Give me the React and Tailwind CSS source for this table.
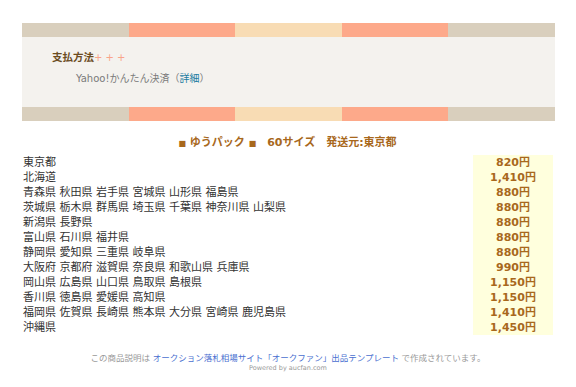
const rows = [
  ["東京都", "820円"],
  ["北海道", "1,410円"],
  ["青森県 秋田県 岩手県 宮城県 山形県 福島県", "880円"],
  ["茨城県 栃木県 群馬県 埼玉県 千葉県 神奈川県 山梨県", "880円"],
  ["新潟県 長野県", "880円"],
  ["富山県 石川県 福井県", "880円"],
  ["静岡県 愛知県 三重県 岐阜県", "880円"],
  ["大阪府 京都府 滋賀県 奈良県 和歌山県 兵庫県", "990円"],
  ["岡山県 広島県 山口県 鳥取県 島根県", "1,150円"],
  ["香川県 徳島県 愛媛県 高知県", "1,150円"],
  ["福岡県 佐賀県 長崎県 熊本県 大分県 宮崎県 鹿児島県", "1,410円"],
  ["沖縄県", "1,450円"],
];

function Stripe() {
  return (
    <div className="flex h-[14px]">
      <div className="flex-1 bg-[#d9cfbd]" />
      <div className="flex-1 bg-[#fda98a]" />
      <div className="flex-1 bg-[#f8dcb4]" />
      <div className="flex-1 bg-[#fda98a]" />
      <div className="flex-1 bg-[#d9cfbd]" />
    </div>
  );
}

export default function App() {
  return (
    <div
      className="w-[576px] h-[387px] bg-white pt-[23px] text-[11px] text-[#333]"
      style={{ fontFamily: '"DejaVu Sans", "Noto Sans CJK JP", sans-serif' }}
    >
      {/* 支払方法 */}
      <div className="ml-[22px] w-[533px]">
        <Stripe />
        <div className="h-[70px] bg-[#f4f2ee] pl-[30px] pt-[13px] text-[10px]">
          <div className="leading-[15px]">
            <span className="text-[10.5px] font-bold text-[#6b4c1f]">支払方法</span>
            <span className="text-[#f9a48a]">+ + +</span>
          </div>
          <div className="ml-[24px] mt-[6px] leading-[15px] text-[#7a7a7a]">
            Yahoo!かんたん決済（<span className="text-[#1a7ca0]">詳細</span>）
          </div>
        </div>
        <Stripe />
      </div>

      {/* 送料 */}
      <div className="ml-[22px] w-[531px]">
        <div className="mt-[14px] mb-[3px] text-center font-bold leading-[16px] text-[#a8681c]">
          <span className="text-[8px]">■</span> ゆうパック <span className="text-[8px]">■</span>　60サイズ　発送元:東京都
        </div>
        <div className="grid grid-cols-[451px_80px]">
          {rows.map(([area, price]) => (
            <div key={area} className="contents">
              <div className="pl-px leading-[15px] whitespace-nowrap">{area}</div>
              <div className="bg-[#ffffdd] text-center font-bold leading-[15px] text-[#a8681c]">{price}</div>
            </div>
          ))}
        </div>
      </div>

      {/* footer */}
      <div className="mt-[17px] text-center text-[8.5px] leading-[12px] text-[#999]">
        この商品説明は <span className="text-[#4a6fd0]">オークション落札相場サイト「オークファン」出品テンプレート</span> で作成されています。
      </div>
      <div className="text-center text-[6.5px] leading-[9px] text-[#999]">Powered by aucfan.com</div>
    </div>
  );
}
